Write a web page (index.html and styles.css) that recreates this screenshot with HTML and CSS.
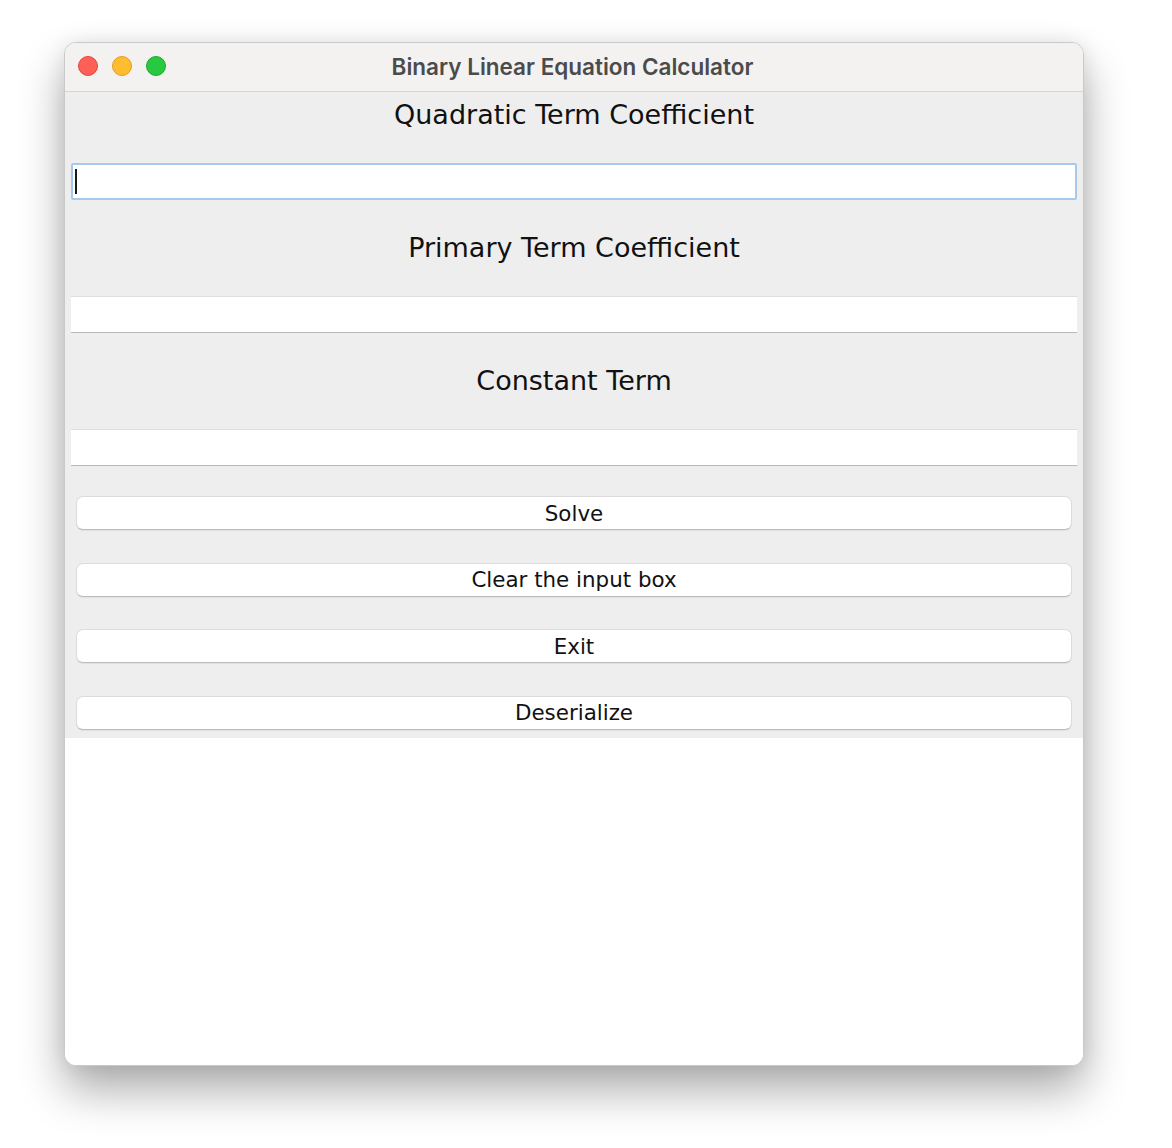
FILE: index.html
```html
<!DOCTYPE html>
<html>
<head>
<meta charset="utf-8">
<link rel="stylesheet" href="styles.css">
</head>
<body>
<div class="window">
  <div class="titlebar">
    <div class="lights">
      <span class="light red"></span>
      <span class="light yellow"></span>
      <span class="light green"></span>
    </div>
    <div class="title">Binary Linear Equation Calculator</div>
  </div>
  <div class="content">
    <div class="label">Quadratic Term Coefficient</div>
    <div class="field focused"><span class="caret"></span></div>
    <div class="label">Primary Term Coefficient</div>
    <div class="field"></div>
    <div class="label">Constant Term</div>
    <div class="field"></div>
    <div class="buttons">
      <div class="btn">Solve</div>
      <div class="btn">Clear the input box</div>
      <div class="btn">Exit</div>
      <div class="btn">Deserialize</div>
    </div>
  </div>
  <div class="blank"></div>
</div>
</body>
</html>
```

FILE: styles.css
```css
html, body {
  margin: 0;
  padding: 0;
  background: #ffffff;
}
body {
  padding: 42px 0 82px 64px;
}
.window {
  width: 1020px;
  height: 1024px;
  box-sizing: border-box;
  border: 1px solid #c9c9c9;
  border-radius: 12px;
  overflow: hidden;
  background: #ffffff;
  box-shadow: 0 24px 45px rgba(0, 0, 0, 0.33), 0 0 20px rgba(0, 0, 0, 0.08);
  display: flex;
  flex-direction: column;
}
.titlebar {
  height: 48px;
  background: #f3f2f1;
  border-bottom: 1px solid #d6d5d4;
  position: relative;
  display: flex;
  align-items: center;
  justify-content: center;
  flex-shrink: 0;
}
.lights {
  position: absolute;
  left: 13px;
  top: 13px;
  display: flex;
  gap: 14px;
}
.light {
  width: 20px;
  height: 20px;
  border-radius: 50%;
  box-sizing: border-box;
}
.red { background: #fe5f57; border: 1px solid #e14640; }
.yellow { background: #febc2e; border: 1px solid #dfa023; }
.green { background: #28c840; border: 1px solid #1aab29; }
.title {
  font-family: "Inter", "Open Sans", sans-serif;
  font-weight: 600;
  font-size: 22.5px;
  color: #4b4b4b;
  margin-left: -3px;
  margin-top: -2px;
}
.content {
  background: #eeeeee;
  padding: 0 6px 8px 6px;
  display: flex;
  flex-direction: column;
  flex-shrink: 0;
}
.label {
  height: 46px;
  line-height: 46px;
  text-align: center;
  font-family: "DejaVu Sans", sans-serif;
  font-size: 27px;
  color: #111111;
  margin-bottom: 25px;
}
.field {
  height: 37px;
  box-sizing: border-box;
  background: #ffffff;
  border-top: 1px solid #dedede;
  border-bottom: 1px solid #b8b8b8;
  margin-bottom: 25px;
  position: relative;
}
.field.focused {
  border: 2px solid #a6c9ec;
  border-radius: 2px;
}
.caret {
  position: absolute;
  left: 2px;
  top: 4px;
  width: 2px;
  height: 25px;
  background: #1a1a1a;
}
.buttons {
  padding: 5px 5px 0 5px;
  display: flex;
  flex-direction: column;
  gap: 32.67px;
}
.btn {
  height: 34px;
  box-sizing: border-box;
  background: #ffffff;
  border-radius: 7px;
  border: 1px solid #dcdcdc;
  border-bottom-color: #bcbcbc;
  box-shadow: 0 1px 1px rgba(0, 0, 0, 0.06);
  display: flex;
  align-items: center;
  justify-content: center;
  font-family: "DejaVu Sans", sans-serif;
  font-size: 21.4px;
  color: #111111;
}
.blank {
  flex: 1;
  background: #ffffff;
}
```
